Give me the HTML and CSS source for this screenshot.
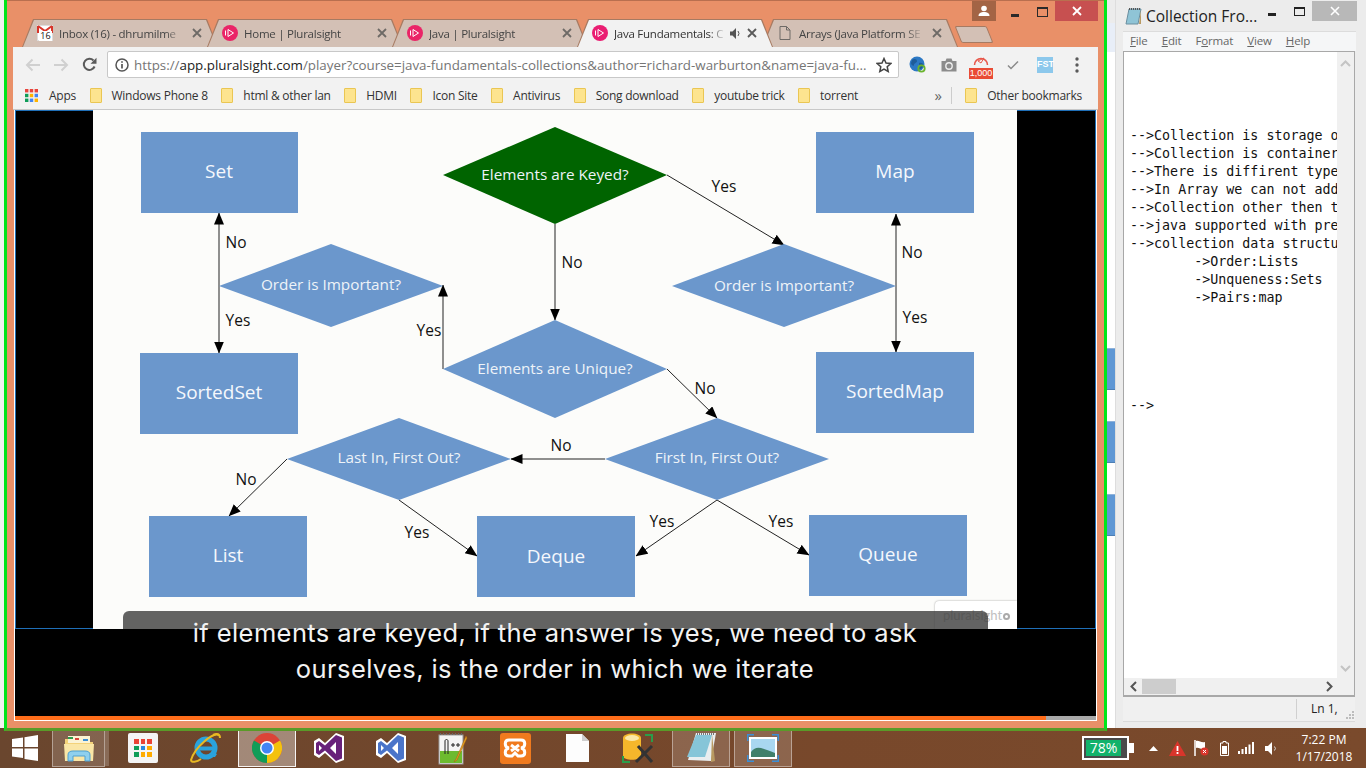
FILE: index.html
```html
<!DOCTYPE html>
<html lang="en">
<head>
  <meta charset="UTF-8">
  <title>Java Fundamentals: Collections</title>
  <link rel="stylesheet" href="styles.css">
</head>
<body>
  <div class="desktop">
    <!-- notepad window, behind the browser -->
    <div class="notepad">
      <div class="np-back-tabs">
        <span class="np-tile"></span>
        <span class="np-tile"></span>
        <span class="np-tile"></span>
      </div>
      <div class="np-main">
        <div class="np-title">
          <svg class="np-icon" width="17" height="18" viewBox="0 0 17 18"><path d="M4 2h12l-3 15H1z" fill="#8fc4d6" stroke="#6a8fa0"/><path d="M14 17l2-14v14z" fill="#b99a62"/><path d="M4 2h12" stroke="#555" stroke-dasharray="1 1" stroke-width="2"/></svg>
          <span class="np-name">Collection Fro...</span>
          <span class="np-min"></span>
          <span class="np-max"></span>
          <span class="np-close"><svg width="10" height="10" viewBox="0 0 10 10"><path d="M1 1l8 8M9 1l-8 8" stroke="#fff" stroke-width="1.6"/></svg></span>
        </div>
        <div class="np-menu">
          <span><u>F</u>ile</span><span><u>E</u>dit</span><span>F<u>o</u>rmat</span><span><u>V</u>iew</span><span><u>H</u>elp</span>
        </div>
        <div class="np-edit">
          <div class="np-body">
            <pre class="np-text">




--&gt;Collection is storage o
--&gt;Collection is container
--&gt;There is diffirent type
--&gt;In Array we can not add
--&gt;Collection other then t
--&gt;java supported with pre
--&gt;collection data structu
	-&gt;Order:Lists
	-&gt;Unqueness:Sets
	-&gt;Pairs:map





--&gt;</pre>
            <div class="np-vscroll">
              <svg width="11" height="7" viewBox="0 0 11 7"><path d="M1 6l4.500-4.500L10 6" fill="none" stroke="#c4c4c4" stroke-width="2"/></svg>
              <svg width="11" height="7" viewBox="0 0 11 7"><path d="M1 1l4.500 4.500L10 1" fill="none" stroke="#c4c4c4" stroke-width="2"/></svg>
            </div>
          </div>
          <div class="np-hscroll">
            <svg width="7" height="11" viewBox="0 0 7 11"><path d="M6 1L1.500 5.500 6 10" fill="none" stroke="#555" stroke-width="2"/></svg>
            <span class="np-thumb"></span>
            <svg class="np-right" width="7" height="11" viewBox="0 0 7 11"><path d="M1 1l4.500 4.500L1 10" fill="none" stroke="#555" stroke-width="2"/></svg>
          </div>
        </div>
        <div class="np-status">
          <span class="np-ln">Ln 1,</span>
          <svg class="np-grip" width="8" height="8" viewBox="0 0 8 8"><path d="M6 0h2v2H6zM3 3h2v2H3zM6 3h2v2H6zM0 6h2v2H0zM3 6h2v2H3zM6 6h2v2H6z" fill="#bcbcbc"/></svg>
        </div>
      </div>
    </div>

    <!-- browser window -->
    <div class="browser-frame">
      <div class="browser">
        <div class="top-row">
          <div class="tabs">
            <div class="tab">
              <svg class="favicon" width="16" height="16" viewBox="0 0 16 16"><rect x="0.500" y="0.500" width="15" height="15" fill="#fff" stroke="#ddd"/><path d="M1 1v7M15 1v7M1 1l7 5 7-5" fill="none" stroke="#d8352a" stroke-width="2"/></svg>
              <span class="badge16">16</span>
              <span class="tab-label">Inbox (16) - dhrumilme</span>
              <svg class="tab-x" width="10" height="10" viewBox="0 0 10 10"><path d="M1 1l8 8M9 1l-8 8" stroke="#6e6a66" stroke-width="1.800"/></svg>
            </div>
            <div class="tab">
              <svg class="favicon" width="16" height="16" viewBox="0 0 16 16"><circle cx="8" cy="8" r="8" fill="#ea2467"/><path d="M6 4.500l5.500 3.500L6 11.500zM3.500 5.500v5" fill="none" stroke="#fff"/></svg>
              <span class="tab-label">Home | Pluralsight</span>
              <svg class="tab-x" width="10" height="10" viewBox="0 0 10 10"><path d="M1 1l8 8M9 1l-8 8" stroke="#6e6a66" stroke-width="1.800"/></svg>
            </div>
            <div class="tab">
              <svg class="favicon" width="16" height="16" viewBox="0 0 16 16"><circle cx="8" cy="8" r="8" fill="#ea2467"/><path d="M6 4.500l5.500 3.500L6 11.500zM3.500 5.500v5" fill="none" stroke="#fff"/></svg>
              <span class="tab-label">Java | Pluralsight</span>
              <svg class="tab-x" width="10" height="10" viewBox="0 0 10 10"><path d="M1 1l8 8M9 1l-8 8" stroke="#6e6a66" stroke-width="1.800"/></svg>
            </div>
            <div class="tab active">
              <svg class="favicon" width="16" height="16" viewBox="0 0 16 16"><circle cx="8" cy="8" r="8" fill="#ea1e72"/><path d="M6 4.500l5.500 3.500L6 11.500zM3.500 5.500v5" fill="none" stroke="#fff"/></svg>
              <span class="tab-label short">Java Fundamentals: C</span>
              <svg class="tab-sound" width="11" height="11" viewBox="0 0 11 11"><path d="M0 3.500h2.500L6 0v11L2.500 7.500H0z" fill="#555"/><path d="M8 3a4 4 0 010 5" fill="none" stroke="#555"/></svg>
              <svg class="tab-x" width="10" height="10" viewBox="0 0 10 10"><path d="M1 1l8 8M9 1l-8 8" stroke="#5a5a5a" stroke-width="1.800"/></svg>
            </div>
            <div class="tab">
              <svg class="favicon" width="16" height="16" viewBox="0 0 16 16"><path d="M3 1.500h6.500L13 5v9.500H3zM9.500 1.500V5H13" fill="none" stroke="#6e6a66"/></svg>
              <span class="tab-label">Arrays (Java Platform SE</span>
              <svg class="tab-x" width="10" height="10" viewBox="0 0 10 10"><path d="M1 1l8 8M9 1l-8 8" stroke="#6e6a66" stroke-width="1.800"/></svg>
            </div>
            <div class="new-tab"></div>
          </div>
          <div class="win-controls">
            <span class="wc-user"><svg width="12" height="12" viewBox="0 0 12 12"><circle cx="6" cy="3.500" r="2.800" fill="#fff"/><path d="M0.500 11c0-3 2.500-4 5.500-4s5.500 1 5.500 4z" fill="#fff"/></svg></span>
            <span class="wc-min"></span>
            <span class="wc-max"></span>
            <span class="wc-close"><svg width="10" height="10" viewBox="0 0 10 10"><path d="M1 1l8 8M9 1l-8 8" stroke="#fff" stroke-width="1.800"/></svg></span>
          </div>
        </div>

        <div class="toolbar">
          <span class="tool"><svg width="16" height="14" viewBox="0 0 16 14"><path d="M15 7H2M7.500 1.500L2 7l5.500 5.500" fill="none" stroke="#d0d0d0" stroke-width="2"/></svg></span>
          <span class="tool"><svg width="16" height="14" viewBox="0 0 16 14"><path d="M1 7h13M8.500 1.500L14 7l-5.500 5.500" fill="none" stroke="#d0d0d0" stroke-width="2"/></svg></span>
          <span class="tool"><svg width="15" height="15" viewBox="0 0 15 15"><path d="M12.600 9.500A5.600 5.600 0 1 1 11.500 3.500" fill="none" stroke="#5a5a5a" stroke-width="2"/><path d="M14.500 0.800v6h-6z" fill="#5a5a5a"/></svg></span>
          <div class="address">
            <svg class="info" width="14" height="14" viewBox="0 0 14 14"><circle cx="7" cy="7" r="6" fill="none" stroke="#555" stroke-width="1.500"/><path d="M7 6v4.500M7 3.200v1.600" stroke="#555" stroke-width="1.700"/></svg>
            <span class="url">https://<b>app.pluralsight.com</b>/player?course=java-fundamentals-collections&amp;author=richard-warburton&amp;name=java-fu...</span>
            <svg class="star" width="16" height="16" viewBox="0 0 16 16"><path d="M8 1.500l2 4.500 4.800.500-3.600 3.200 1 4.800L8 12l-4.200 2.500 1-4.800L1.200 6.500 6 6z" fill="none" stroke="#444" stroke-width="1.500"/></svg>
          </div>
          <div class="extensions">
            <span class="ext"><svg width="17" height="17" viewBox="0 0 17 17"><circle cx="8" cy="8" r="7.500" fill="#2c78c4"/><path d="M3 4c2-2 5-1 5 1s-3 2-3 4-3 0-3-2zM10 7c2-1 5 0 4 3s-3 4-4 2z" fill="#1d5c99"/><circle cx="12.500" cy="12.500" r="3.200" fill="none" stroke="#6ab42d" stroke-width="1.800"/></svg></span>
            <span class="ext"><svg width="16" height="14" viewBox="0 0 16 14"><path d="M0.500 3h4l1-2.500h5l1 2.500h4v10.500H.500z" fill="#8c8c8c"/><circle cx="8" cy="8" r="3.200" fill="#8c8c8c" stroke="#eee" stroke-width="1.400"/></svg></span>
            <span class="ext ext-gauge">
              <svg width="16" height="13" viewBox="0 0 16 13"><path d="M1.500 11a6.500 6.500 0 1113 0" fill="none" stroke="#e8574a" stroke-width="1.500"/><path d="M5 7l6-3-3 5z" fill="none" stroke="#e8574a"/></svg>
              <span class="gauge-count">1,000</span>
            </span>
            <span class="ext"><svg width="12" height="10" viewBox="0 0 12 10"><path d="M1 5.500l3 3 7-7" fill="none" stroke="#8a8a8a" stroke-width="1.500"/></svg></span>
            <span class="ext"><span class="fst">FST</span></span>
            <span class="ext"><svg width="4" height="16" viewBox="0 0 4 16"><circle cx="2" cy="2" r="1.700" fill="#5a5a5a"/><circle cx="2" cy="8" r="1.700" fill="#5a5a5a"/><circle cx="2" cy="14" r="1.700" fill="#5a5a5a"/></svg></span>
          </div>
        </div>

        <div class="bookmarks">
          <svg class="apps" width="13" height="13" viewBox="0 0 13 13">
            <rect width="3.400" height="3.400" fill="#e8453c"/><rect x="4.800" width="3.400" height="3.400" fill="#e8453c"/><rect x="9.600" width="3.400" height="3.400" fill="#e8453c"/>
            <rect y="4.800" width="3.400" height="3.400" fill="#0f9d58"/><rect x="4.800" y="4.800" width="3.400" height="3.400" fill="#ffb300"/><rect x="9.600" y="4.800" width="3.400" height="3.400" fill="#4285f4"/>
            <rect y="9.600" width="3.400" height="3.400" fill="#0f9d58"/><rect x="4.800" y="9.600" width="3.400" height="3.400" fill="#4285f4"/><rect x="9.600" y="9.600" width="3.400" height="3.400" fill="#ffb300"/>
          </svg>
          <span class="bm-apps">Apps</span>
          <span class="bm"><i class="folder"></i>Windows Phone 8</span>
          <span class="bm"><i class="folder"></i>html &amp; other lan</span>
          <span class="bm"><i class="folder"></i>HDMI</span>
          <span class="bm"><i class="folder"></i>Icon Site</span>
          <span class="bm"><i class="folder"></i>Antivirus</span>
          <span class="bm"><i class="folder"></i>Song download</span>
          <span class="bm"><i class="folder"></i>youtube trick</span>
          <span class="bm"><i class="folder"></i>torrent</span>
          <span class="bm-more">»</span>
          <span class="bm-sep"></span>
          <span class="bm"><i class="folder"></i>Other bookmarks</span>
        </div>

        <div class="video">
          <div class="stage">
            <div class="stage-outline"></div>
            <div class="slide">
              <svg class="diagram" width="924" height="518" viewBox="93 110 924 518">
                <defs>
                  <marker id="head" markerWidth="12" markerHeight="12" refX="11.500" refY="5" orient="auto" markerUnits="userSpaceOnUse"><path d="M0 0l12 5-12 5z" fill="#000"/></marker>
                </defs>
                <g class="links">
                  <path d="M555 224V320" marker-end="url(#head)"/>
                  <path d="M667 175L784 245" marker-end="url(#head)"/>
                  <path d="M219 286V213" marker-end="url(#head)"/>
                  <path d="M219 286V353" marker-end="url(#head)"/>
                  <path d="M443 369V285" marker-end="url(#head)"/>
                  <path d="M667 369L717 418" marker-end="url(#head)"/>
                  <path d="M605 459H511" marker-end="url(#head)"/>
                  <path d="M287 459L229 516" marker-end="url(#head)"/>
                  <path d="M399 500L477 556" marker-end="url(#head)"/>
                  <path d="M717 500L636 556" marker-end="url(#head)"/>
                  <path d="M717 500L809 555" marker-end="url(#head)"/>
                  <path d="M896 286V214" marker-end="url(#head)"/>
                  <path d="M896 286V352" marker-end="url(#head)"/>
                </g>
                <g class="boxes">
                  <rect x="141" y="132" width="157" height="81"/>
                  <rect x="816" y="132" width="158" height="81"/>
                  <rect x="140" y="353" width="158" height="81"/>
                  <rect x="816" y="352" width="158" height="81"/>
                  <rect x="149" y="516" width="158" height="81"/>
                  <rect x="477" y="516" width="158" height="81"/>
                  <rect x="809" y="515" width="158" height="81"/>
                  <polygon points="219,286 331,244 443,286 331,327"/>
                  <polygon points="672,286 784,244 896,286 784,327"/>
                  <polygon points="443,369 555,320 667,369 555,418"/>
                  <polygon points="605,459 717,418 829,459 717,500"/>
                  <polygon points="287,459 399,418 511,459 399,500"/>
                </g>
                <polygon class="keyed" points="443,175 555,127 667,175 555,224"/>
                <g class="box-text">
                  <text x="219" y="178">Set</text>
                  <text x="895" y="178">Map</text>
                  <text x="219" y="399">SortedSet</text>
                  <text x="895" y="398">SortedMap</text>
                  <text x="228" y="562">List</text>
                  <text x="556" y="563">Deque</text>
                  <text x="888" y="561">Queue</text>
                </g>
                <g class="cond-text">
                  <text x="555" y="180">Elements are Keyed?</text>
                  <text x="331" y="290">Order is Important?</text>
                  <text x="784" y="291">Order is Important?</text>
                  <text x="555" y="374">Elements are Unique?</text>
                  <text x="717" y="463">First In, First Out?</text>
                  <text x="399" y="463">Last In, First Out?</text>
                </g>
                <g class="link-text">
                  <text x="724" y="192">Yes</text>
                  <text x="572" y="268">No</text>
                  <text x="236" y="248">No</text>
                  <text x="238" y="326">Yes</text>
                  <text x="429" y="336">Yes</text>
                  <text x="912" y="258">No</text>
                  <text x="915" y="323">Yes</text>
                  <text x="705" y="394">No</text>
                  <text x="561" y="451">No</text>
                  <text x="246" y="485">No</text>
                  <text x="417" y="538">Yes</text>
                  <text x="662" y="527">Yes</text>
                  <text x="781" y="527">Yes</text>
                </g>
              </svg>
            </div>
            <div class="watermark">pluralsight<i class="wm-dot"></i></div>
            <div class="caption-bar"></div>
            <div class="subtitle">if elements are keyed, if the answer is yes, we need to ask<br>ourselves, is the order in which we iterate</div>
          </div>
          <div class="progress"><div class="progress-done"></div></div>
        </div>
      </div>
    </div>
  </div>

  <!-- taskbar -->
  <div class="taskbar">
    <svg class="start" width="26" height="26" viewBox="0 0 26 26"><path d="M0 4l11-1.500V12H0zM12.500 2.300L26 0v12H12.500zM0 13.500h11V23L0 21.500zM12.500 13.500H26V26l-13.500-2z" fill="#fff"/></svg>
    <div class="task-items">
      <div class="task open stacked">
        <svg width="32" height="30" viewBox="0 0 32 30"><path d="M2 6h9l2 3h17v18H2z" fill="#f3d27a"/><rect x="5" y="3" width="22" height="7" fill="#fbf3d4"/><path d="M5 4h5v2H5z" fill="#2a9d4a"/><path d="M12 5h4v2h-4z" fill="#d9443a"/><path d="M20 6h5v2h-5z" fill="#3b8ed6"/><path d="M1 11h30l-1 17H2z" fill="#fae6a6"/><path d="M5 28v-6c0-3 2-4 5-4h12c3 0 5 1 5 4v6h-5v-5H10v5z" fill="#8fd0ee" stroke="#4fa0cf"/></svg>
      </div>
      <div class="task">
        <span class="store-tile">
          <i class="c-r"></i><i class="c-r"></i><i class="c-r"></i>
          <i class="c-g"></i><i class="c-b"></i><i class="c-y"></i>
          <i class="c-g"></i><i class="c-y"></i><i class="c-y"></i>
        </span>
      </div>
      <div class="task">
        <svg width="32" height="32" viewBox="0 0 32 32"><circle cx="17" cy="16" r="9" fill="none" stroke="#2aa3dd" stroke-width="5"/><path d="M8 16.500h18" stroke="#2aa3dd" stroke-width="4"/><path d="M24 20l4 2-2 3h-6z" fill="#2aa3dd"/><path d="M30 3c-6-3-24 12-28 25 0 3 6 2 10-1" fill="none" stroke="#e8b923" stroke-width="2"/><path d="M24 3c4-2 7-1 7 3" fill="none" stroke="#e8b923" stroke-width="2"/></svg>
      </div>
      <div class="task running">
        <svg width="30" height="30" viewBox="0 0 30 30"><circle cx="15" cy="15" r="15" fill="#db4437"/><path d="M15 15L2 7.500A15 15 0 0 0 15 30z" fill="#0f9d58"/><path d="M15 15v15A15 15 0 0 0 28 7.500z" fill="#f4c20d"/><circle cx="15" cy="15" r="7" fill="#fff"/><circle cx="15" cy="15" r="5.500" fill="#4285f4"/></svg>
      </div>
      <div class="task">
        <svg width="32" height="32" viewBox="0 0 32 32"><path d="M23 1l8 3v24l-8 3-11-10-6 5-5-3V9l5-3 6 5z" fill="#fff"/><path d="M23 3l6 2.500v21L23 29 12 18.500 6 23l-3-2V11l3-2 6 4.500zM23 10l-6 6 6 6zM6 13v6l3-3z" fill="#68217a" fill-rule="evenodd"/></svg>
      </div>
      <div class="task">
        <svg width="32" height="32" viewBox="0 0 32 32"><path d="M23 1l8 3v24l-8 3-11-10-6 5-5-3V9l5-3 6 5z" fill="#fff"/><path d="M23 3l6 2.500v21L23 29 12 18.500 6 23l-3-2V11l3-2 6 4.500zM23 10l-6 6 6 6zM6 13v6l3-3z" fill="#4a74c9" fill-rule="evenodd"/></svg>
      </div>
      <div class="task">
        <svg width="30" height="33" viewBox="0 0 30 33"><rect x="1" y="3" width="24" height="29" fill="#f4f4f4" stroke="#999"/><rect x="2" y="19" width="22" height="12" fill="#6dbb2f"/><path d="M2 2h22" stroke="#666" stroke-width="2" stroke-dasharray="1 2"/><path d="M7 22V9c0-2 3-2 3 0v13" fill="none" stroke="#222"/><path d="M13 13h4M15 11v4M18 13h4M20 11v4" stroke="#222"/><path d="M28 4L18 27l-2 3 3-2L29 6z" fill="#e8a020" stroke="#a06010" stroke-width=".5"/></svg>
      </div>
      <div class="task">
        <span class="xampp"><svg width="24" height="20" viewBox="0 0 24 20"><path d="M7 2h3l5 0h3c5 0 5 7 0 8 5 1 5 8 0 8h-3l-3-3-3 3H6c-5 0-5-7 0-8C1 9 1 2 6 2zM12 10l-4-3M12 10l4-3M12 10l-4 3M12 10l4 3" fill="none" stroke="#fff" stroke-width="3"/></svg></span>
      </div>
      <div class="task">
        <svg width="23" height="28" viewBox="0 0 23 28"><path d="M0 0h16l7 7v21H0z" fill="#fdfdfd"/><path d="M16 0l7 7h-7z" fill="#cfcfcf"/></svg>
      </div>
      <div class="task">
        <svg width="34" height="32" viewBox="0 0 34 32"><path d="M1 6c0-6 18-6 18 0v18c0 5-18 5-18 0z" fill="#f5b72b"/><ellipse cx="10" cy="6" rx="7" ry="3" fill="#fbe7a8"/><path d="M23 3h7v7M1 24v6h7" fill="none" stroke="#2a9d4a" stroke-width="2"/><path d="M14 30L30 14M16 14l14 16" stroke="#333" stroke-width="3"/></svg>
      </div>
      <div class="task open">
        <svg width="32" height="32" viewBox="0 0 32 32"><path d="M11 1h20L26 29 3 28z" fill="#e9eef0"/><path d="M11 3h16L20 25H2z" fill="#86c5d8"/><path d="M27 2l3 27-4 1z" fill="#b99a62"/><path d="M12 2h17" stroke="#777" stroke-width="2" stroke-dasharray="1 1"/></svg>
      </div>
      <div class="task open">
        <svg width="32" height="28" viewBox="0 0 32 28"><rect x="2" y="3" width="28" height="22" fill="#fff"/><rect x="4" y="5" width="24" height="18" fill="#a9d7f0"/><path d="M4 18c6-8 12-3 24 1v4H4z" fill="#3f7f6a"/><path d="M0 7V0h7M25 0h7v7M0 21v7h7M32 21v7h-7" fill="none" stroke="#3b8ed6" stroke-width="3"/></svg>
      </div>
    </div>
    <div class="tray">
      <div class="battery-full">
        <div class="battery-body"><div class="battery-level">78%</div></div>
        <span class="battery-tip"></span>
      </div>
      <svg class="tray-caret" width="9" height="5" viewBox="0 0 9 5"><path d="M0 5l4.500-5L9 5z" fill="#fff"/></svg>
      <svg class="tray-warn" width="17" height="15" viewBox="0 0 17 15"><path d="M8.500 0L17 15H0z" fill="#d9352b"/><path d="M8.500 5v5M8.500 11v2" stroke="#fff" stroke-width="1.800"/></svg>
      <svg class="tray-flag" width="15" height="16" viewBox="0 0 15 16"><path d="M1 0v16" stroke="#fff" stroke-width="1.500"/><path d="M2 1c3-1 5 2 9 1v7c-4 1-6-2-9-1z" fill="#fff"/><circle cx="10.500" cy="11.500" r="4" fill="#d9352b"/><path d="M9 10l3 3M12 10l-3 3" stroke="#fff"/></svg>
      <svg class="tray-bat" width="9" height="15" viewBox="0 0 9 15"><path d="M3 .500h3v1.500h2.500v12.500H.5V2H3z" fill="none" stroke="#fff"/><rect x="2" y="5" width="5" height="8" fill="#fff"/></svg>
      <svg class="tray-signal" width="16" height="12" viewBox="0 0 16 12"><rect y="9" width="2" height="3" fill="#fff"/><rect x="3.500" y="7" width="2" height="5" fill="#fff"/><rect x="7" y="5" width="2" height="7" fill="#fff"/><rect x="10.500" y="2.500" width="2" height="9.500" fill="#fff"/><rect x="14" y="0" width="2" height="12" fill="#fff"/></svg>
      <svg class="tray-vol" width="13" height="13" viewBox="0 0 13 13"><path d="M0 4h3l4-4v13L3 9H0z" fill="#fff"/><path d="M9.500 4.500a3 3 0 010 4" fill="none" stroke="#ddd"/></svg>
      <div class="clock"><div>7:22 PM</div><div>1/17/2018</div></div>
    </div>
  </div>
</body>
</html>
```

FILE: styles.css
```css
* {
  box-sizing: border-box;
}

html, body {
  margin: 0;
  padding: 0;
}

body {
  width: 1366px;
  height: 768px;
  overflow: hidden;
  background-color: #f2f2f2;
  font-family: "Open Sans", "Liberation Sans", sans-serif;
}

svg {
  display: block;
  flex: none;
}

.desktop {
  position: relative;
  height: 728px;
}

/* ---- browser ---- */
.browser-frame {
  position: absolute;
  left: 4px;
  top: 0;
  width: 1103px;
  height: 731px;
  z-index: 2;
  border-left: 3px solid #00e61a;
  border-right: 3px solid #00e61a;
  border-bottom: 3px solid #5a9a28;
}

.browser {
  height: 100%;
  padding: 0 6px 7px;
  background-color: #e99068;
  border-top: 1px solid #b96f4f;
  display: flex;
  flex-direction: column;
}

.top-row {
  position: relative;
  height: 46px;
  flex: none;
  margin: 0 -6px;
}

.tabs {
  display: flex;
  padding-top: 18px;
  margin-left: 15px;
  height: 46px;
}

.tab {
  position: relative;
  width: 196px;
  height: 28px;
  flex: none;
  margin-right: -11px;
  padding-left: 15px;
  display: flex;
  align-items: center;
  font-size: 11.500px;
  letter-spacing: -0.25px;
  color: #444;
  background-color: #a67a62;
  clip-path: polygon(0 100%, 11px 0, calc(100% - 11px) 0, 100% 100%);
}

.tab::before {
  content: "";
  position: absolute;
  left: 1px;
  right: 1px;
  top: 1px;
  bottom: 0;
  background-color: #d3c0b5;
  clip-path: polygon(0 100%, 11px 0, calc(100% - 11px) 0, 100% 100%);
}

.tab > * {
  position: relative;
}

.tab.active {
  z-index: 1;
  color: #333;
}

.tab.active::before {
  background-color: #f2f2f2;
}

.favicon {
  margin-right: 6px;
  margin-top: -1px;
}

.badge16 {
  position: absolute !important;
  left: 17px;
  top: 12px;
  width: 13px;
  font-size: 9px;
  line-height: 10px;
  letter-spacing: 0;
  text-align: center;
  color: #111;
  background-color: #fff;
}

.tab-label {
  width: 125px;
  overflow: hidden;
  white-space: nowrap;
  -webkit-mask-image: linear-gradient(to right, #000 85%, transparent);
  mask-image: linear-gradient(to right, #000 85%, transparent);
}

.tab-label.short {
  width: 112px;
}

.tab-sound {
  margin-left: 4px;
}

.tab-x {
  position: absolute !important;
  left: 170px;
  top: 9px;
}

.new-tab {
  width: 32px;
  height: 17px;
  flex: none;
  margin: 7px 0 0 11px;
  background-color: #d3c0b5;
  border: 1px solid #a67a62;
  transform: skewX(22deg);
  border-radius: 2px;
}

.win-controls {
  position: absolute;
  top: 0;
  right: 6px;
  display: flex;
  height: 20px;
}

.wc-user {
  width: 24px;
  height: 20px;
  background-color: #a36445;
  display: flex;
  align-items: center;
  justify-content: center;
}

.wc-min {
  width: 8px;
  height: 3px;
  margin: 13px 18px 0 15px;
  background-color: #2a2a2a;
}

.wc-max {
  width: 11px;
  height: 10px;
  margin: 6px 7px 0 0;
  border: 1px solid #2a2a2a;
  border-top-width: 2px;
}

.wc-close {
  width: 43px;
  height: 20px;
  background-color: #c75050;
  display: flex;
  align-items: center;
  justify-content: center;
}

.toolbar {
  height: 35px;
  flex: none;
  background-color: #f2f2f2;
  padding-left: 6px;
  display: flex;
  align-items: center;
}

.tool {
  width: 28px;
  height: 28px;
  display: flex;
  align-items: center;
  justify-content: center;
}

.address {
  width: 792px;
  height: 27px;
  margin-left: 4px;
  padding: 0 6px 0 7px;
  background-color: #fff;
  border: 1px solid #c8c8c8;
  border-radius: 2px;
  display: flex;
  align-items: center;
}

.url {
  flex: 1;
  margin-left: 5px;
  font-size: 13.350px;
  white-space: nowrap;
  overflow: hidden;
  color: #757575;
}

.url b {
  font-weight: 400;
  color: #222;
}

.extensions {
  display: flex;
  margin-left: 2px;
}

.ext {
  position: relative;
  width: 32px;
  height: 28px;
  display: flex;
  align-items: center;
  justify-content: center;
}

.ext-gauge {
  align-items: flex-start;
  padding-top: 3px;
}

.gauge-count {
  position: absolute;
  left: 4px;
  bottom: 0;
  width: 24px;
  height: 11px;
  font-family: "Liberation Sans", sans-serif;
  font-size: 9px;
  line-height: 11px;
  text-align: center;
  color: #fff;
  background-color: #e94b35;
}

.fst {
  width: 16px;
  height: 16px;
  font-family: "Liberation Sans", sans-serif;
  font-size: 9px;
  font-weight: 700;
  line-height: 14px;
  text-align: center;
  color: #fff;
  background-color: #8cc8ec;
}

.bookmarks {
  height: 28px;
  flex: none;
  padding: 0 16px 1px 12px;
  background-color: #f2f2f2;
  border-bottom: 1px solid #c8c8c8;
  display: flex;
  align-items: center;
  font-size: 12px;
  letter-spacing: -0.25px;
  color: #333;
  white-space: nowrap;
}

.bm-apps {
  margin-left: 11px;
}

.bm {
  display: flex;
  align-items: center;
  margin-left: 13.500px;
}

.folder {
  width: 12px;
  height: 15px;
  margin-right: 10px;
  background-color: #fde48f;
  border: 1px solid #eac653;
  border-radius: 1px;
}

.bm-more {
  margin-left: auto;
  font-size: 15px;
  line-height: 16px;
  color: #666;
}

.bm-sep {
  width: 1px;
  height: 17px;
  margin-left: 9px;
  background-color: #ccc;
}

/* ---- player ---- */
.video {
  flex: 1;
  min-height: 0;
  margin: 0 1px;
  padding: 0 1px 1px;
  background-color: #fff;
  display: flex;
  flex-direction: column;
}

.stage {
  position: relative;
  flex: 1;
  background-color: #000;
  overflow: hidden;
  padding-left: 78px;
}

.stage-outline {
  position: absolute;
  left: 0;
  top: 0;
  width: 100%;
  height: 519px;
  border: 1px solid #1f6fb8;
}

.slide {
  position: relative;
  width: 924px;
  height: 519px;
  background-color: #fcfcfa;
}

.links path {
  fill: none;
  stroke: #222;
  stroke-width: 1;
}

.boxes rect, .boxes polygon {
  fill: #6b97cc;
}

.keyed {
  fill: #006400;
}

.box-text text {
  font-size: 19px;
  fill: #f5f8fc;
  text-anchor: middle;
}

.cond-text text {
  font-size: 15.300px;
  fill: #eef3f8;
  text-anchor: middle;
}

.link-text text {
  font-size: 15.500px;
  fill: #111;
  text-anchor: middle;
}

.watermark {
  position: absolute;
  left: 920px;
  top: 491px;
  width: 82px;
  height: 28px;
  padding: 5px 0 0 8px;
  background-color: #fff;
  border-radius: 4px 0 0 0;
  box-shadow: 0 0 2px rgba(0, 0, 0, 0.4);
  font-family: "Lato", sans-serif;
  font-size: 13px;
  line-height: 18px;
  color: #c0c0c0;
  white-space: nowrap;
}

.wm-dot {
  display: inline-block;
  width: 7px;
  height: 7px;
  margin-left: 1px;
  border: 2px solid #aaa;
  border-radius: 50%;
}

.caption-bar {
  position: absolute;
  left: 108px;
  top: 501px;
  width: 865px;
  height: 18px;
  background-color: rgba(60, 60, 60, 0.8);
  border-radius: 6px 6px 0 0;
}

.subtitle {
  position: absolute;
  left: 78px;
  top: 505px;
  width: 924px;
  font-family: "Inter", sans-serif;
  font-size: 25.500px;
  font-weight: 400;
  letter-spacing: 0.4px;
  line-height: 36px;
  text-align: center;
  color: #f2f2f2;
  white-space: nowrap;
}

.progress {
  height: 4px;
  flex: none;
  background-color: #a8a8a8;
}

.progress-done {
  width: 95.4%;
  height: 100%;
  background-color: #ff6d1a;
}

/* ---- notepad ---- */
.notepad {
  position: absolute;
  left: 1107px;
  top: 0;
  width: 259px;
  height: 728px;
  display: flex;
  background-color: #fff;
}

.np-back-tabs {
  width: 8px;
  flex: none;
  padding-top: 348px;
  display: flex;
  flex-direction: column;
  gap: 31px;
  background: linear-gradient(to bottom, #ececec 23px, #e8eef8 23px, #e8eef8 52px, #fff 52px);
}

.np-tile {
  height: 42px;
  background-color: #5f97d4;
  border-bottom: 1px solid #4e7fb4;
  border-top: 1px solid #8fb2da;
}

.np-main {
  flex: 1;
  min-width: 0;
  height: 100%;
  padding: 0 10px 6px 7px;
  background-color: #ececec;
  border-left: 1px solid #ddd;
  display: flex;
  flex-direction: column;
}

.np-title {
  position: relative;
  height: 31px;
  flex: none;
  display: flex;
  padding-left: 2px;
  padding-top: 7px;
}

.np-name {
  margin-left: 4px;
  font-size: 15.500px;
  line-height: 18px;
  color: #222;
  white-space: nowrap;
}

.np-min {
  position: absolute;
  left: 145px;
  top: 13px;
  width: 8px;
  height: 3px;
  background-color: #222;
}

.np-max {
  position: absolute;
  left: 171px;
  top: 7px;
  width: 11px;
  height: 9px;
  border: 1px solid #222;
  border-top-width: 2px;
}

.np-close {
  position: absolute;
  left: 189px;
  top: 1px;
  width: 45px;
  height: 20px;
  background-color: #b8b8b8;
  display: flex;
  align-items: center;
  justify-content: center;
}

.np-menu {
  height: 20px;
  flex: none;
  padding-left: 7px;
  background-color: #f5f6f7;
  border-top: 1px solid #dcdcdc;
  display: flex;
  gap: 14px;
  font-size: 11.500px;
  letter-spacing: -0.15px;
  line-height: 18px;
  color: #666;
}

.np-edit {
  flex: 1;
  min-height: 0;
  margin-right: 1px;
  display: flex;
  flex-direction: column;
  border: 1px solid #a8a8a8;
  border-bottom-width: 2px;
  background-color: #fff;
}

.np-body {
  flex: 1;
  min-height: 0;
  display: flex;
  background-color: #fff;
}

.np-text {
  flex: 1;
  min-width: 0;
  margin: 0;
  padding: 3px 0 0 6px;
  overflow: hidden;
  font-family: "DejaVu Sans Mono", monospace;
  font-size: 13.330px;
  line-height: 18px;
  tab-size: 8;
  color: #111;
}

.np-vscroll {
  width: 17px;
  flex: none;
  padding: 8px 3px 6px;
  background-color: #f0f0f0;
  display: flex;
  flex-direction: column;
  justify-content: space-between;
}

.np-hscroll {
  height: 17px;
  flex: none;
  padding: 0 6px;
  background-color: #f0f0f0;
  display: flex;
  align-items: center;
}

.np-thumb {
  width: 34px;
  height: 15px;
  margin-left: 5px;
  background-color: #cdcdcd;
}

.np-right {
  margin-left: auto;
  margin-right: 15px;
}

.np-status {
  height: 25px;
  flex: none;
  margin-right: 1px;
  padding-left: 173px;
  background-color: #f0f0f0;
  border-bottom: 1px solid #dadada;
  display: flex;
  align-items: center;
  font-size: 12px;
  color: #222;
}

.np-ln {
  height: 20px;
  line-height: 20px;
  padding-left: 14px;
  border-left: 1px solid #d0d0d0;
}

.np-grip {
  margin-left: auto;
  margin-right: 1px;
  align-self: flex-end;
  margin-bottom: 2px;
}

/* ---- taskbar ---- */
.taskbar {
  height: 40px;
  background: linear-gradient(to right, #6a462e, #78482b 60%, #7a4a2c);
  display: flex;
  align-items: center;
}

.start {
  margin-left: 12px;
  flex: none;
}

.task-items {
  display: flex;
  gap: 4px;
  margin-left: 14px;
}

.task {
  position: relative;
  width: 58px;
  height: 38px;
  display: flex;
  align-items: center;
  justify-content: center;
}

.task.open {
  background-color: rgba(255, 255, 255, 0.16);
  border: 1px solid rgba(255, 255, 255, 0.4);
}

.task.running {
  background-color: rgba(255, 255, 255, 0.36);
  border: 1px solid rgba(255, 255, 255, 0.9);
}

.task.stacked {
  width: 53px;
  margin-right: 5px;
  box-shadow: 5px 0 0 -1px rgba(255, 255, 255, 0.2);
}

.store-tile {
  width: 30px;
  height: 30px;
  padding: 6px;
  background-color: #f4f4f4;
  border-radius: 2px;
  display: grid;
  grid-template-columns: repeat(3, 1fr);
  gap: 2px;
}

.store-tile i {
  display: block;
}

.c-r { background-color: #ea4335; }
.c-g { background-color: #0f9d58; }
.c-b { background-color: #2a88e0; }
.c-y { background-color: #ffab00; }

.xampp {
  width: 31px;
  height: 31px;
  background-color: #f07a1e;
  border-radius: 3px;
  display: flex;
  align-items: center;
  justify-content: center;
}

.tray {
  margin-left: auto;
  width: 284px;
  height: 100%;
  position: relative;
  display: flex;
  align-items: center;
  color: #fff;
}

.battery-full {
  width: 52px;
  height: 24px;
  display: flex;
  align-items: center;
}

.battery-body {
  width: 47px;
  height: 24px;
  padding: 2px;
  background-color: #4a4a4a;
  border: 2px solid #fff;
}

.battery-level {
  width: 35px;
  height: 100%;
  background-color: #12b26b;
  font-size: 14px;
  line-height: 16px;
  text-align: center;
  white-space: nowrap;
}

.battery-tip {
  width: 5px;
  height: 10px;
  background-color: #fff;
}

.tray-caret { margin-left: 15px; }
.tray-warn { margin-left: 11px; }
.tray-flag { margin-left: 8px; }
.tray-bat { margin-left: 11px; }
.tray-signal { margin-left: 9px; }
.tray-vol { margin-left: 11px; }

.clock {
  margin-left: 15px;
  width: 62px;
  font-size: 12px;
  line-height: 17px;
  text-align: center;
  white-space: nowrap;
}
```
